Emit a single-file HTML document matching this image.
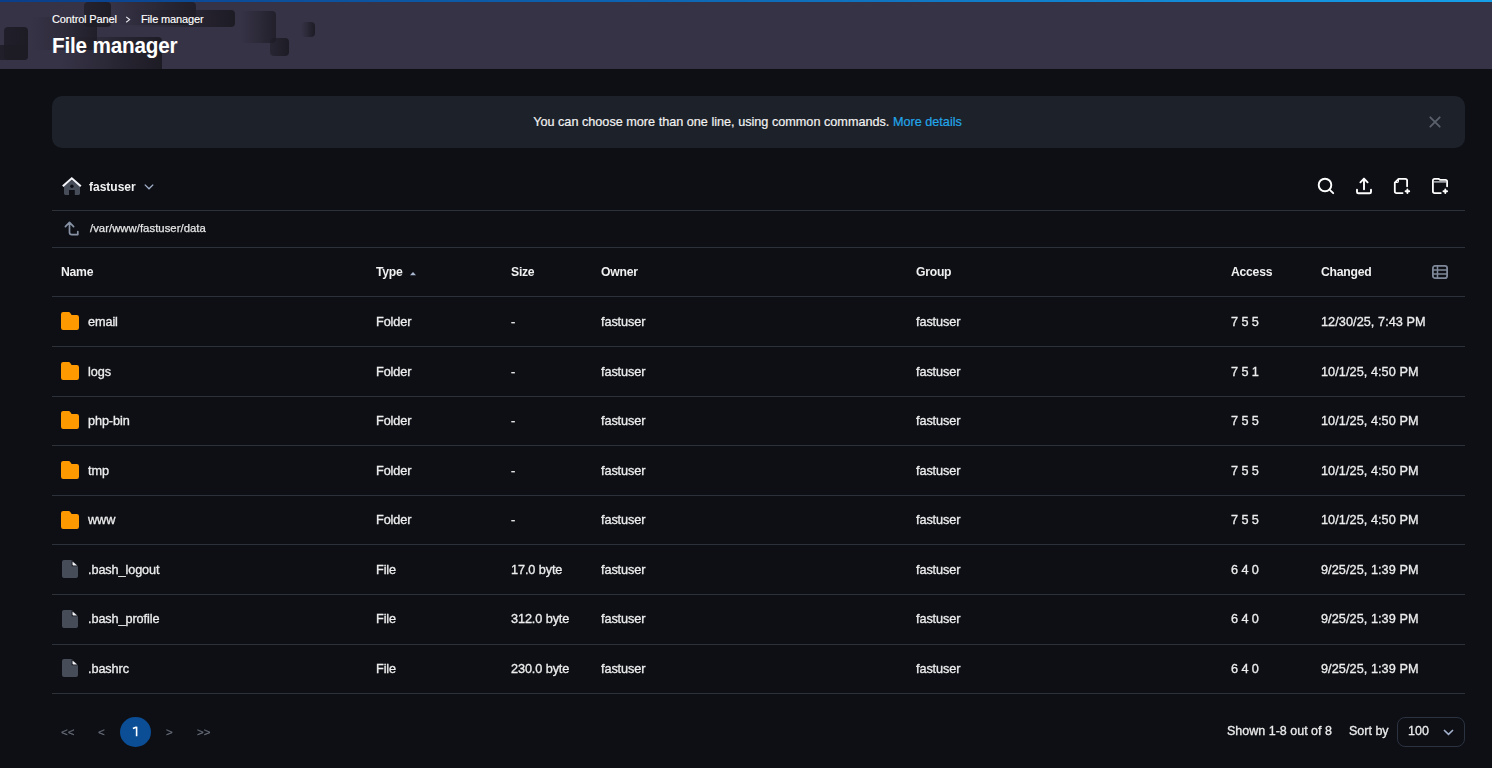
<!DOCTYPE html>
<html><head><meta charset="utf-8">
<style>
*{margin:0;padding:0;box-sizing:border-box}
html,body{width:1492px;height:768px;overflow:hidden;background:#0d0f15;font-family:"Liberation Sans",sans-serif;color:#ececec}
#hdr{position:absolute;left:0;top:0;width:1492px;height:69px;background:#373347;overflow:hidden}
#topline{position:absolute;left:0;top:0;width:1492px;height:2px;background:linear-gradient(90deg,#0a3e8a 0%,#0e6bb8 50%,#16a0ea 100%)}
.blk{position:absolute;border-radius:4px;background:linear-gradient(90deg,rgba(24,21,30,0) 0%,rgba(24,21,30,.75) 100%)}
.crumb{position:absolute;top:12px;font-size:11px;line-height:14px;color:#fff;white-space:nowrap;letter-spacing:-0.15px;-webkit-text-stroke:0.15px #fff}
#title{position:absolute;left:52px;top:33.5px;font-size:22px;line-height:24px;font-weight:bold;color:#fff;white-space:nowrap;letter-spacing:-0.2px;transform:scaleX(0.94);transform-origin:0 0}
#notice{position:absolute;left:52px;top:96px;width:1413px;height:52px;background:#1d2129;border-radius:10px}
#notice .txt{position:absolute;left:0;right:22px;top:18.5px;text-align:center;font-size:12.66px;line-height:15px;color:#f2f2f2;white-space:nowrap;-webkit-text-stroke:0.2px #f2f2f2}
#notice a{color:#22a6ea;text-decoration:none;-webkit-text-stroke:0.2px #22a6ea}
.hl{position:absolute;left:52px;width:1413px;height:1px;background:#2d313a}
.t{position:absolute;white-space:nowrap;font-size:12.7px;line-height:15px;color:#ededed;-webkit-text-stroke:0.32px #ededed;letter-spacing:-0.1px;will-change:transform}
.th{position:absolute;white-space:nowrap;font-size:12.2px;line-height:15px;font-weight:bold;letter-spacing:-0.25px;color:#f0f0f0;top:265px;will-change:transform}
svg{position:absolute;overflow:visible}
.pg{position:absolute;top:724px;font-size:11.6px;line-height:15px;color:#686d79;-webkit-text-stroke:0.2px #686d79;white-space:nowrap;will-change:transform}
.bt{position:absolute;top:724.2px;font-size:12.5px;line-height:15px;color:#ececec;white-space:nowrap;-webkit-text-stroke:0.3px #ececec;will-change:transform}

</style></head><body>
<div id="hdr">
  <div id="topline"></div>
  <div class="blk" style="left:-6px;top:45px;width:34px;height:15px;background:linear-gradient(90deg,rgba(29,27,36,.8),rgba(29,27,36,1))"></div>
  <div class="blk" style="left:4px;top:27px;width:24px;height:33px;background:linear-gradient(90deg,rgba(29,27,36,.85),rgba(29,27,36,1))"></div>
  <div class="blk" style="left:30px;top:17px;width:67px;height:33px;background:linear-gradient(90deg,rgba(29,27,36,0) 0%,rgba(29,27,36,.35) 50%,rgba(29,27,36,.85) 100%)"></div>
  <div class="blk" style="left:83.5px;top:2px;width:27px;height:25px;background:linear-gradient(90deg,rgba(29,27,36,.7),rgba(29,27,36,.95))"></div>
  <div class="blk" style="left:110px;top:2px;width:85.5px;height:23px;background:linear-gradient(90deg,rgba(29,27,36,0) 0%,rgba(29,27,36,.85) 100%)"></div>
  <div class="blk" style="left:130px;top:10.3px;width:105px;height:16.5px;background:linear-gradient(90deg,rgba(29,27,36,0) 0%,rgba(29,27,36,1) 100%)"></div>
  <div class="blk" style="left:60px;top:37px;width:102px;height:40px;background:linear-gradient(90deg,rgba(29,27,36,0) 0%,rgba(29,27,36,.5) 50%,rgba(29,27,36,1) 100%)"></div>
  <div class="blk" style="left:240px;top:11px;width:36px;height:32px;background:linear-gradient(90deg,rgba(29,27,36,0) 0%,rgba(29,27,36,.8) 100%)"></div>
  <div class="blk" style="left:270px;top:37.5px;width:19px;height:18.5px;background:linear-gradient(90deg,rgba(29,27,36,.55),rgba(29,27,36,1))"></div>
  <div class="blk" style="left:301px;top:22px;width:14px;height:14.5px;background:linear-gradient(90deg,rgba(29,27,36,0) 0%,rgba(29,27,36,1) 100%)"></div>
</div>
<div class="crumb" style="left:52px">Control Panel</div>
<svg width="6" height="8" viewBox="0 0 6 8" style="left:125px;top:16px"><path d="M1.2 0.9L4.6 3.6L1.2 6.3" fill="none" stroke="#e8e8ee" stroke-width="1.15"/></svg>
<div class="crumb" style="left:141px">File manager</div>
<div id="title">File manager</div>
<div id="notice"><div class="txt">You can choose more than one line, using common commands. <a>More details</a></div>
<svg width="12" height="12" viewBox="0 0 12 12" style="left:1377px;top:19.5px"><path d="M1.3 1.3L10.7 10.7M10.7 1.3L1.3 10.7" stroke="#5b616c" stroke-width="1.8" stroke-linecap="round"/></svg>
</div>
<svg width="20" height="19" viewBox="0 0 20 19" style="left:62px;top:177px">
 <path d="M2 9V16.6Q2 18 3.4 18H7V13H12.8V18H16.6Q18 18 18 16.6V9L9.9 3Z" fill="#464c58"/>
 <circle cx="9.9" cy="9.2" r="1.7" fill="#0d0f15"/>
 <path d="M0.8 9.2L9.8 1.3L18.8 9.2" fill="none" stroke="#f4f6fb" stroke-width="2.1" stroke-linejoin="miter"/>
</svg>
<div style="position:absolute;left:89px;top:180px;font-size:12px;line-height:15px;font-weight:bold;color:#f2f2f2;will-change:transform">fastuser</div>
<svg width="10" height="6" viewBox="0 0 10 6" style="left:144px;top:184px"><path d="M0.8 0.6L5 4.8L9.2 0.6" fill="none" stroke="#a3b1cc" stroke-width="1.3"/></svg>

<svg width="18" height="18" viewBox="0 0 18 18" style="left:1317px;top:177px"><circle cx="8" cy="8" r="6.3" fill="none" stroke="#fff" stroke-width="1.9"/><path d="M13.3 13.3L16.2 16.2" stroke="#fff" stroke-width="1.9" stroke-linecap="round"/></svg>
<svg width="18" height="18" viewBox="0 0 18 18" style="left:1355px;top:177px"><path d="M9 12.3V1.9M5.4 5.3L9 1.6L12.6 5.3" fill="none" stroke="#fff" stroke-width="1.9" stroke-linecap="round" stroke-linejoin="round"/><path d="M2 12.7V14.9Q2 16.3 3.4 16.3H14.6Q16 16.3 16 14.9V12.7" fill="none" stroke="#fff" stroke-width="1.9" stroke-linecap="round"/></svg>
<svg width="18" height="18" viewBox="0 0 18 18" style="left:1393px;top:177px"><path d="M9.6 16.1H3.6Q1.8 16.1 1.8 14.3V5.6L5.6 1.8H12.3Q14.1 1.8 14.1 3.6V9.3" fill="none" stroke="#fff" stroke-width="1.8" stroke-linecap="round" stroke-linejoin="round"/><path d="M5.4 2.2V4.3Q5.4 5.4 4.3 5.4H2.2" fill="none" stroke="#fff" stroke-width="1.2"/><path d="M14.4 12.4V16M12.6 14.2H16.2" stroke="#fff" stroke-width="1.9" stroke-linecap="round"/></svg>
<svg width="18" height="18" viewBox="0 0 18 18" style="left:1431px;top:177px"><path d="M9.8 16.1H3.7Q1.9 16.1 1.9 14.3V3.6Q1.9 1.9 3.6 1.9H7.8L9.3 2.9H14.4Q16.1 2.9 16.1 4.6V9.3" fill="none" stroke="#fff" stroke-width="1.8" stroke-linecap="round" stroke-linejoin="round"/><path d="M2.5 4.9H15.5" stroke="#cfd2d8" stroke-width="1.3"/><path d="M14.3 12.4V16M12.5 14.2H16.1" stroke="#fff" stroke-width="1.9" stroke-linecap="round"/></svg>

<svg width="16" height="16" viewBox="0 0 16 16" style="left:62px;top:220px"><path d="M7.5 12.5V2.6M3.4 6.6L7.5 2.3L11.6 6.6M7.5 12.2Q7.5 14.6 9.9 14.6H15.8V11.6" fill="none" stroke="#8792a4" stroke-width="1.7" stroke-linecap="round" stroke-linejoin="round"/></svg>
<div style="position:absolute;left:90px;top:221px;font-size:11.3px;line-height:14px;color:#e6e6e6;white-space:nowrap;letter-spacing:0.04px;-webkit-text-stroke:0.25px #e2e2e2;will-change:transform">/var/www/fastuser/data</div>

<div class="th" style="left:61px">Name</div>
<div class="th" style="left:376px">Type</div>
<svg width="6" height="4" viewBox="0 0 6 4" style="left:410px;top:272px"><path d="M0 3.2L3 0L6 3.2Z" fill="#a9b6d0"/></svg>
<div class="th" style="left:511px">Size</div>
<div class="th" style="left:601px">Owner</div>
<div class="th" style="left:916px">Group</div>
<div class="th" style="left:1231px">Access</div>
<div class="th" style="left:1321px">Changed</div>
<svg width="16" height="14" viewBox="0 0 16 14" style="left:1432px;top:265px"><rect x="0.9" y="0.9" width="14.2" height="12.2" rx="2.2" fill="none" stroke="#7f8898" stroke-width="1.8"/><path d="M5.5 1V13M1 5H15M1 9H15" stroke="#7f8898" stroke-width="1.5"/></svg>
<div class="hl" style="top:210px"></div>
<div class="hl" style="top:247px"></div>
<div class="hl" style="top:296px"></div>
<div class="hl" style="top:346px"></div>
<div class="hl" style="top:396px"></div>
<div class="hl" style="top:445px"></div>
<div class="hl" style="top:495px"></div>
<div class="hl" style="top:544px"></div>
<div class="hl" style="top:594px"></div>
<div class="hl" style="top:644px"></div>
<div class="hl" style="top:693px"></div>
<svg class="ic" width="18" height="18" viewBox="0 0 18 18" style="left:61px;top:312.00px"><path d="M0 2.2Q0 0 2.2 0H7.6Q8.6 0 9.3 1.1L10.6 3H15.8Q18 3 18 5.2V15.8Q18 18 15.8 18H2.2Q0 18 0 15.8Z" fill="#ff9900"/></svg>
<div class="t" style="left:88px;top:314.80px">email</div>
<div class="t" style="left:376px;top:314.80px">Folder</div>
<div class="t" style="left:511px;top:314.80px">-</div>
<div class="t" style="left:601px;top:314.80px">fastuser</div>
<div class="t" style="left:916px;top:314.80px">fastuser</div>
<div class="t" style="left:1231px;top:314.80px">7 5 5</div>
<div class="t" style="left:1321px;top:314.80px;letter-spacing:0.06px">12/30/25, 7:43 PM</div>
<svg class="ic" width="18" height="18" viewBox="0 0 18 18" style="left:61px;top:361.62px"><path d="M0 2.2Q0 0 2.2 0H7.6Q8.6 0 9.3 1.1L10.6 3H15.8Q18 3 18 5.2V15.8Q18 18 15.8 18H2.2Q0 18 0 15.8Z" fill="#ff9900"/></svg>
<div class="t" style="left:88px;top:364.80px">logs</div>
<div class="t" style="left:376px;top:364.80px">Folder</div>
<div class="t" style="left:511px;top:364.80px">-</div>
<div class="t" style="left:601px;top:364.80px">fastuser</div>
<div class="t" style="left:916px;top:364.80px">fastuser</div>
<div class="t" style="left:1231px;top:364.80px">7 5 1</div>
<div class="t" style="left:1321px;top:364.80px;letter-spacing:0.06px">10/1/25, 4:50 PM</div>
<svg class="ic" width="18" height="18" viewBox="0 0 18 18" style="left:61px;top:411.25px"><path d="M0 2.2Q0 0 2.2 0H7.6Q8.6 0 9.3 1.1L10.6 3H15.8Q18 3 18 5.2V15.8Q18 18 15.8 18H2.2Q0 18 0 15.8Z" fill="#ff9900"/></svg>
<div class="t" style="left:88px;top:413.80px">php-bin</div>
<div class="t" style="left:376px;top:413.80px">Folder</div>
<div class="t" style="left:511px;top:413.80px">-</div>
<div class="t" style="left:601px;top:413.80px">fastuser</div>
<div class="t" style="left:916px;top:413.80px">fastuser</div>
<div class="t" style="left:1231px;top:413.80px">7 5 5</div>
<div class="t" style="left:1321px;top:413.80px;letter-spacing:0.06px">10/1/25, 4:50 PM</div>
<svg class="ic" width="18" height="18" viewBox="0 0 18 18" style="left:61px;top:460.88px"><path d="M0 2.2Q0 0 2.2 0H7.6Q8.6 0 9.3 1.1L10.6 3H15.8Q18 3 18 5.2V15.8Q18 18 15.8 18H2.2Q0 18 0 15.8Z" fill="#ff9900"/></svg>
<div class="t" style="left:88px;top:463.80px">tmp</div>
<div class="t" style="left:376px;top:463.80px">Folder</div>
<div class="t" style="left:511px;top:463.80px">-</div>
<div class="t" style="left:601px;top:463.80px">fastuser</div>
<div class="t" style="left:916px;top:463.80px">fastuser</div>
<div class="t" style="left:1231px;top:463.80px">7 5 5</div>
<div class="t" style="left:1321px;top:463.80px;letter-spacing:0.06px">10/1/25, 4:50 PM</div>
<svg class="ic" width="18" height="18" viewBox="0 0 18 18" style="left:61px;top:510.50px"><path d="M0 2.2Q0 0 2.2 0H7.6Q8.6 0 9.3 1.1L10.6 3H15.8Q18 3 18 5.2V15.8Q18 18 15.8 18H2.2Q0 18 0 15.8Z" fill="#ff9900"/></svg>
<div class="t" style="left:88px;top:512.80px">www</div>
<div class="t" style="left:376px;top:512.80px">Folder</div>
<div class="t" style="left:511px;top:512.80px">-</div>
<div class="t" style="left:601px;top:512.80px">fastuser</div>
<div class="t" style="left:916px;top:512.80px">fastuser</div>
<div class="t" style="left:1231px;top:512.80px">7 5 5</div>
<div class="t" style="left:1321px;top:512.80px;letter-spacing:0.06px">10/1/25, 4:50 PM</div>
<svg class="ic" width="16" height="18" viewBox="0 0 16 18" style="left:62px;top:560.12px"><path d="M0 2Q0 0 2 0H10L16 6V16Q16 18 14 18H2Q0 18 0 16Z" fill="#464c58"/><path d="M9.7 -0.3V6.3H16.3Z" fill="#0d0f15"/><path d="M10.5 1.4V4.7Q10.5 5.5 11.3 5.5H15.1Z" fill="#f4f6fa"/></svg>
<div class="t" style="left:88px;top:562.80px">.bash_logout</div>
<div class="t" style="left:376px;top:562.80px">File</div>
<div class="t" style="left:511px;top:562.80px">17.0 byte</div>
<div class="t" style="left:601px;top:562.80px">fastuser</div>
<div class="t" style="left:916px;top:562.80px">fastuser</div>
<div class="t" style="left:1231px;top:562.80px">6 4 0</div>
<div class="t" style="left:1321px;top:562.80px;letter-spacing:0.06px">9/25/25, 1:39 PM</div>
<svg class="ic" width="16" height="18" viewBox="0 0 16 18" style="left:62px;top:609.75px"><path d="M0 2Q0 0 2 0H10L16 6V16Q16 18 14 18H2Q0 18 0 16Z" fill="#464c58"/><path d="M9.7 -0.3V6.3H16.3Z" fill="#0d0f15"/><path d="M10.5 1.4V4.7Q10.5 5.5 11.3 5.5H15.1Z" fill="#f4f6fa"/></svg>
<div class="t" style="left:88px;top:611.80px">.bash_profile</div>
<div class="t" style="left:376px;top:611.80px">File</div>
<div class="t" style="left:511px;top:611.80px">312.0 byte</div>
<div class="t" style="left:601px;top:611.80px">fastuser</div>
<div class="t" style="left:916px;top:611.80px">fastuser</div>
<div class="t" style="left:1231px;top:611.80px">6 4 0</div>
<div class="t" style="left:1321px;top:611.80px;letter-spacing:0.06px">9/25/25, 1:39 PM</div>
<svg class="ic" width="16" height="18" viewBox="0 0 16 18" style="left:62px;top:659.38px"><path d="M0 2Q0 0 2 0H10L16 6V16Q16 18 14 18H2Q0 18 0 16Z" fill="#464c58"/><path d="M9.7 -0.3V6.3H16.3Z" fill="#0d0f15"/><path d="M10.5 1.4V4.7Q10.5 5.5 11.3 5.5H15.1Z" fill="#f4f6fa"/></svg>
<div class="t" style="left:88px;top:661.80px">.bashrc</div>
<div class="t" style="left:376px;top:661.80px">File</div>
<div class="t" style="left:511px;top:661.80px">230.0 byte</div>
<div class="t" style="left:601px;top:661.80px">fastuser</div>
<div class="t" style="left:916px;top:661.80px">fastuser</div>
<div class="t" style="left:1231px;top:661.80px">6 4 0</div>
<div class="t" style="left:1321px;top:661.80px;letter-spacing:0.06px">9/25/25, 1:39 PM</div>
<div class="pg" style="left:61px">&lt;&lt;</div>
<div class="pg" style="left:98px">&lt;</div>
<div style="position:absolute;left:120px;top:716.8px;width:31px;height:30.4px;border-radius:50%;background:#0b4e96"></div>
<svg width="8" height="12" viewBox="0 0 8 12" style="left:132px;top:726px"><path d="M4.6 0.8V10.2M4.6 0.9L0.9 2.6" fill="none" stroke="#fff" stroke-width="1.6" stroke-linejoin="round"/></svg>
<div class="pg" style="left:166px">&gt;</div>
<div class="pg" style="left:197px">&gt;&gt;</div>
<div class="bt" style="left:1227px">Shown 1-8 out of 8</div>
<div class="bt" style="left:1349px">Sort by</div>
<div style="position:absolute;left:1397px;top:717px;width:68px;height:30px;border:1px solid #2b3240;border-radius:8px"></div>
<div class="bt" style="left:1408px">100</div>
<svg width="11" height="7" viewBox="0 0 11 7" style="left:1442.5px;top:728.6px"><path d="M1 1L5.5 5.3L10 1" fill="none" stroke="#a3b1cc" stroke-width="1.6"/></svg>
</body></html>
